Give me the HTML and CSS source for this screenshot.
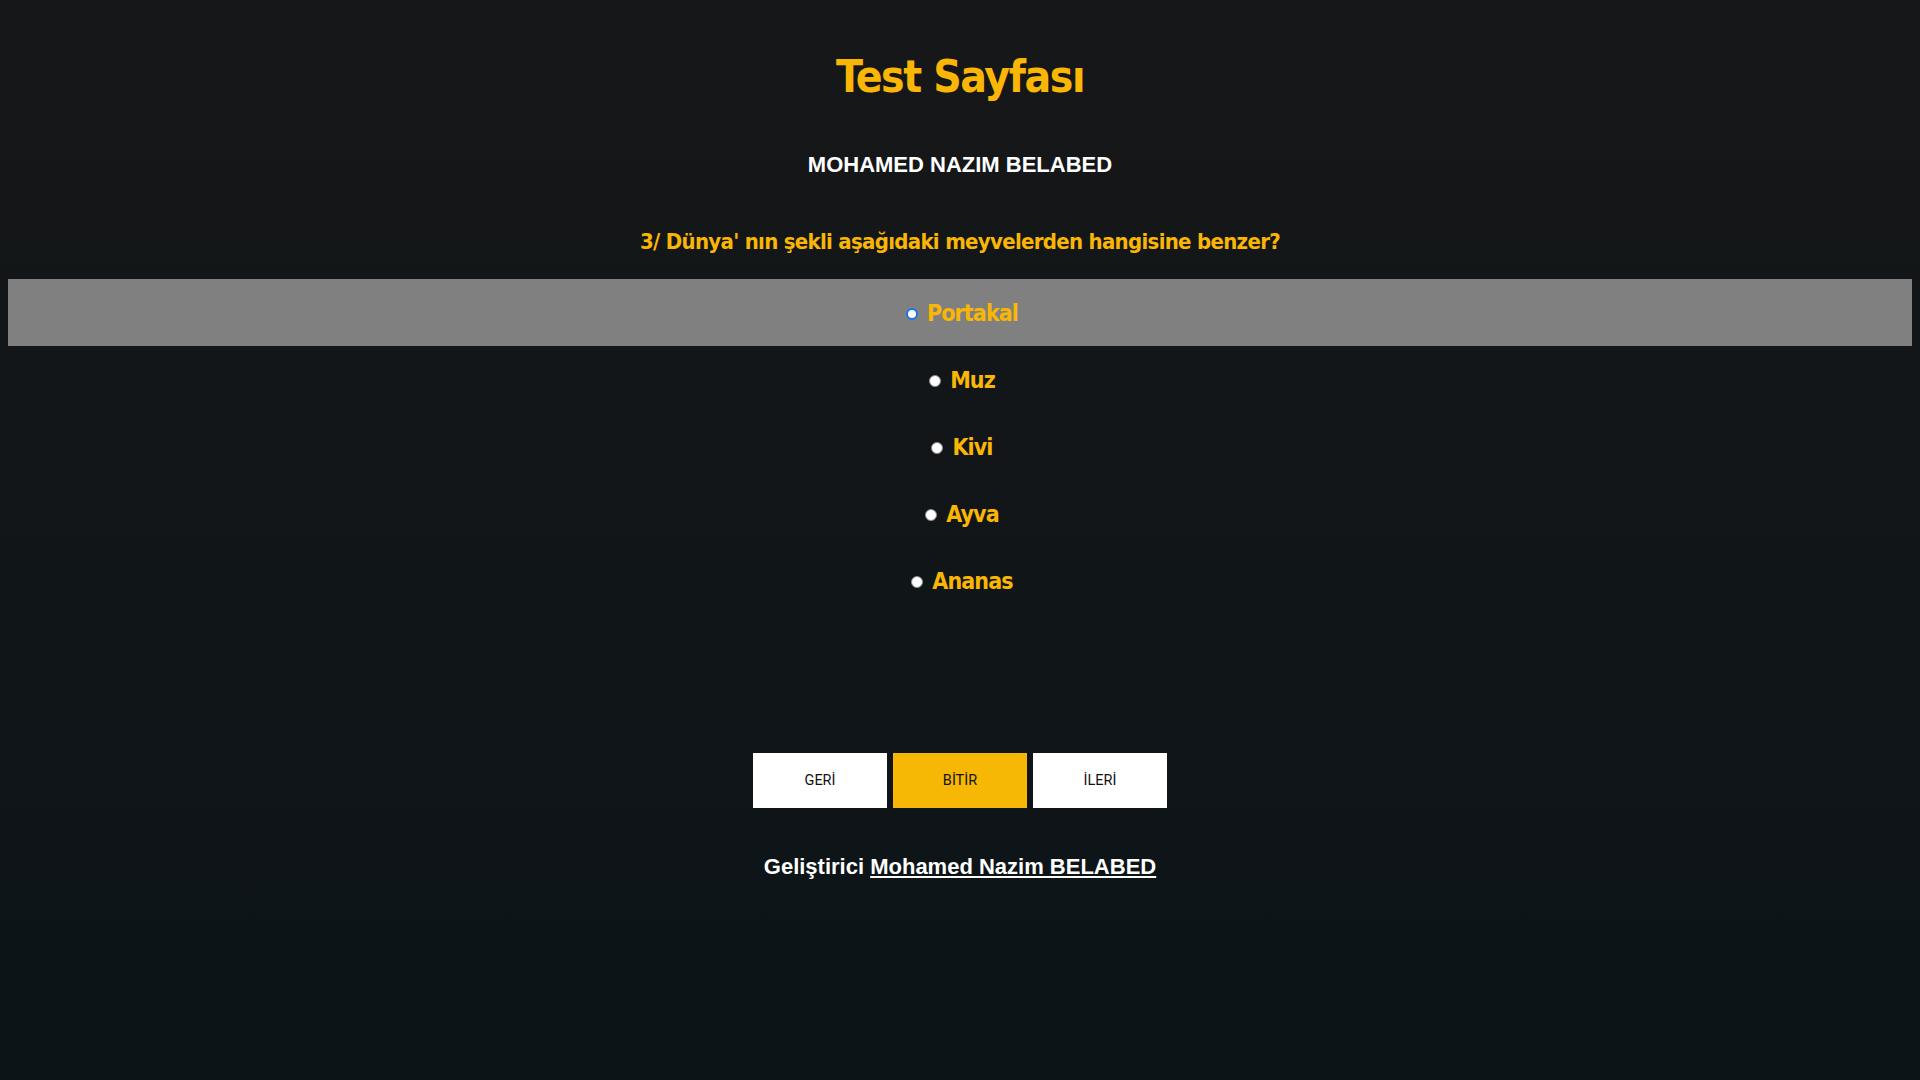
FILE: index.html
```html
<!DOCTYPE html>
<html lang="tr">
<head>
<meta charset="utf-8">
<title>Test Sayfası</title>
<link rel="stylesheet" href="styles.css">
</head>
<body>
<main class="page">
  <h1 class="title">Test Sayfası</h1>
  <h3 class="student">MOHAMED NAZIM BELABED</h3>
  <h4 class="question">3/ Dünya' nın şekli aşağıdaki meyvelerden hangisine benzer?</h4>
  <div class="options">
    <label class="option option-active"><input type="radio" name="q" class="radio radio-active"><span>Portakal</span></label>
    <label class="option"><input type="radio" name="q" class="radio"><span>Muz</span></label>
    <label class="option"><input type="radio" name="q" class="radio"><span>Kivi</span></label>
    <label class="option"><input type="radio" name="q" class="radio"><span>Ayva</span></label>
    <label class="option"><input type="radio" name="q" class="radio"><span>Ananas</span></label>
  </div>
  <div class="buttons">
    <button class="btn">GERİ</button>
    <button class="btn btn-finish">BİTİR</button>
    <button class="btn">İLERİ</button>
  </div>
  <p class="footer">Geliştirici <a href="#" class="footer-link">Mohamed Nazim BELABED</a></p>
</main>
</body>
</html>
```
FILE: styles.css
```css
html, body {
  height: 100%;
}
body {
  margin: 0;
  padding: 0 8px;
  background: linear-gradient(to bottom, #161718 0%, #0c1418 100%);
  font-family: "DejaVu Sans Condensed", "Liberation Sans", sans-serif;
  color: #f9b605;
  min-height: 1080px;
  box-sizing: border-box;
}
.page {
  display: flex;
  flex-direction: column;
  align-items: stretch;
  text-align: center;
}
.title {
  margin: 50px 0 0;
  font-size: 44px;
  line-height: 54px;
  font-weight: bold;
  letter-spacing: -1.4px;
  color: #f9b605;
}
.student {
  margin: 48px 0 0;
  font-family: "Liberation Sans", Arial, sans-serif;
  font-size: 22px;
  line-height: 26px;
  font-weight: bold;
  color: #ffffff;
}
.question {
  margin: 50px 0 0;
  font-size: 22px;
  line-height: 28px;
  font-weight: bold;
  letter-spacing: -0.7px;
  color: #f9b605;
}
.options {
  margin-top: 23px;
  display: flex;
  flex-direction: column;
}
.option {
  height: 67px;
  display: flex;
  align-items: center;
  justify-content: center;
  gap: 9px;
  font-size: 23px;
  font-weight: bold;
  letter-spacing: -0.9px;
  color: #f9b605;
}
.option-active {
  background: #808080;
}
.radio {
  appearance: none;
  -webkit-appearance: none;
  margin: 2px 0 0 4px;
  width: 12px;
  height: 12px;
  border-radius: 50%;
  background: #ffffff;
  border: 1px solid #8a8a8a;
  box-sizing: border-box;
}
.radio-active {
  border: 2px solid #1a73e8;
}
.buttons {
  margin-top: 139px;
  display: flex;
  justify-content: center;
  gap: 6px;
}
.btn {
  width: 134px;
  height: 55px;
  border: none;
  border-radius: 0;
  background: #ffffff;
  color: #111111;
  font-family: Roboto, "Liberation Sans", sans-serif;
  font-size: 14.5px;
  padding: 0;
}
.btn-finish {
  background: #f7b705;
}
.footer {
  margin: 46px 0 0;
  font-family: "Liberation Sans", Arial, sans-serif;
  font-size: 22px;
  line-height: 26px;
  font-weight: bold;
  color: #ffffff;
}
.footer-link {
  color: #ffffff;
  text-decoration: underline;
}
```
